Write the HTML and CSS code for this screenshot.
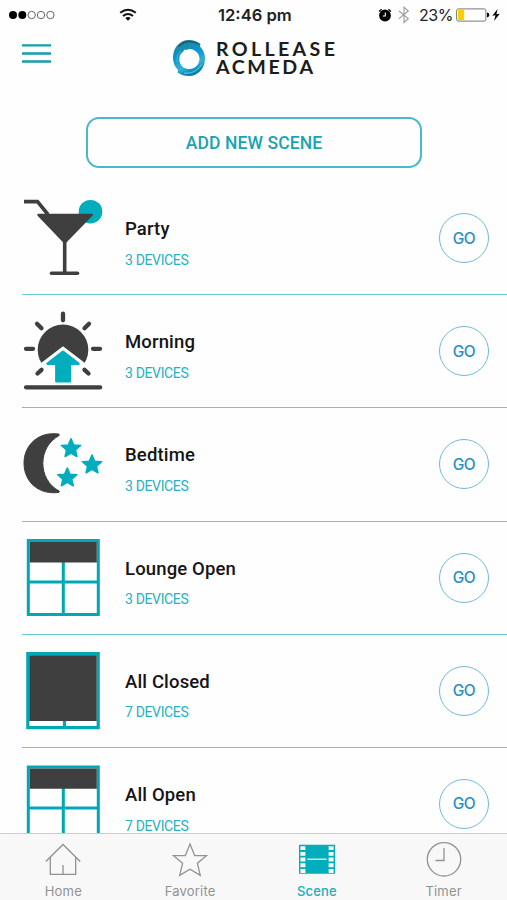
FILE: index.html
```html
<!DOCTYPE html>
<html lang="en">
<head>
<meta charset="utf-8">
<title>Scenes</title>
<link rel="stylesheet" href="styles.css">
</head>
<body>
<div class="app">
  <div class="status">
    <svg class="signal" width="50" height="12" viewBox="0 0 50 12"><circle cx="5" cy="6" r="4"/><circle cx="14.3" cy="6" r="4"/><g fill="none" stroke="#555" stroke-width=".9"><circle cx="23.7" cy="6" r="3.7"/><circle cx="33" cy="6" r="3.7"/><circle cx="42.4" cy="6" r="3.7"/></g></svg>
    <svg class="wifi" width="18" height="14" viewBox="0 0 18 14"><g fill="none" stroke="#111" stroke-width="2"><path d="M1.2 4.8Q9-1.3 16.8 4.8"/><path d="M4 8Q9 3.9 14 8"/></g><path d="M6.3 10Q9 8 11.7 10L9 12.8Z"/></svg>
    <span class="time">12:46 pm</span>
    <div class="right">
      <svg width="14" height="14" viewBox="0 0 14 14"><circle cx="7" cy="7.5" r="5.9"/><path d="M1 3.5L3.6 1.2M13 3.5L10.4 1.2" stroke="#111" stroke-width="1.3"/><path d="M7.3 4.4V8H4.8" fill="none" stroke="#fff" stroke-width="1.1"/></svg>
      <svg class="bt" width="12" height="18" viewBox="0 0 12 18"><path d="M1 5L10.3 12.7L6 16.5V1.2L10.3 5L1 12.7" fill="none" stroke="#999" stroke-width="1.1"/></svg>
      <span class="pct">23%</span>
      <svg class="battery" width="34" height="14" viewBox="0 0 34 14"><rect x=".6" y=".9" width="29.3" height="12.2" rx="1.8" fill="#fff" stroke="#777"/><path d="M2 2H8.2V12H2Z" fill="#fc0"/><path d="M31 4.6Q33.4 5 33.4 7T31 9.4Z"/></svg>
      <svg class="bolt" width="8" height="12" viewBox="0 0 8 12"><path d="M5.6 0L.3 6.8L3.5 6.2L2 12L7.8 4.8L4.4 5.2Z"/></svg>
    </div>
  </div>

  <header class="header">
    <svg class="menu" width="29" height="22" viewBox="0 0 29 22"><path d="M0 2.300H29M0 10.500H29M0 18.500H29" stroke="#159fae" stroke-width="2.300"/></svg>
    <div class="brand">
      <svg width="34" height="38" viewBox="0 0 34 38">
        <defs><linearGradient id="ring" x1="0" y1="0" x2=".35" y2="1"><stop offset="0" stop-color="#17697e"/><stop offset=".22" stop-color="#1b8aa5"/><stop offset=".5" stop-color="#0a96cf"/><stop offset=".8" stop-color="#35b3d5"/><stop offset="1" stop-color="#087fa8"/></linearGradient></defs>
        <path fill="url(#ring)" fill-rule="evenodd" d="M17 1C21.500 1 25 2.300 28.500 5L28 7.500C31.500 11 33 15 33 19.500C33 29.500 26 37 17 37C12.500 37 9 36 5.500 33.500L6 31C2.500 27.500 1 23.500 1 18.500C1 8.500 8 1 17 1ZM17.500 10L13.500 11L12 10.500L11.500 12.500C8.500 14.500 7.300 16.500 7.300 20C7.300 26 11.500 30 17 30C23 30 27.500 25.500 27.500 19.500C27.500 14.500 23 10 17.500 10Z"/>
        <path d="M6.500 7.500Q16 -1.500 27.500 5.500" fill="none" stroke="#1c5d72" stroke-width="1.400"/>
        <path d="M9 12Q3.500 17 5.500 23" fill="none" stroke="#4bb8da" stroke-width="1"/>
        <path d="M12 34Q24 35.500 30 25" fill="none" stroke="#4bbadb" stroke-width="1.500"/>
      </svg>
      <div class="brandname"><span class="l1">ROLLEASE</span><span class="l2">ACMEDA</span></div>
    </div>
  </header>

  <div class="add">ADD NEW SCENE</div>

  <ul class="scenes">
    <li>
      <svg class="pic" viewBox="22 181 84 113"><circle cx="90.500" cy="211.700" r="11.800" fill="#00adbd"/><g fill="none" stroke="#3f3f3f"><path d="M24 201.600H37.500L48 214.500" stroke-width="3.600"/><path d="M64.700 240V272" stroke-width="3.600"/><path d="M51.500 273.300H77.500" stroke-width="3.600" stroke-linecap="round"/></g><path d="M38.500 215H91.500L64.800 242.500Z" fill="#3f3f3f" stroke="#3f3f3f" stroke-width="2.500" stroke-linejoin="round"/></svg>
      <div class="text"><b>Party</b><span>3 DEVICES</span></div><div class="go">GO</div>
    </li>
    <li>
      <svg class="pic" viewBox="22 294.200 84 113"><circle cx="63" cy="350" r="25.300" fill="#3f3f3f"/><path d="M63 346.500L37.500 366V380H88.500V366Z" fill="#fff"/><g stroke="#3f3f3f" stroke-width="4.300" stroke-linecap="round"><path d="M63 313.800V320.500M37 324L41.500 328.500M89 324L84.500 328.500M26 349H33M93 349H100M37.500 373.700L41.500 370M88.500 373.700L84.500 370M26 387.500H100.200"/></g><path d="M63 352L47.500 363.900H56.300V381.500H70V363.900H78.500Z" fill="#00adbd" stroke="#00adbd" stroke-width="2.400" stroke-linejoin="round"/></svg>
      <div class="text"><b>Morning</b><span>3 DEVICES</span></div><div class="go">GO</div>
    </li>
    <li>
      <svg class="pic" viewBox="22 407.400 84 113"><path d="M58.800 434.500C39 431.500 24 445 24 463.500C24 483 39.500 495.500 58.800 492.800Q60 492.300 59 491.300C37.500 480 37.500 447.500 59 436Q60 435 58.800 434.500Z" fill="#3f3f3f" stroke="#3f3f3f" stroke-width="1"/><defs><path id="star" d="M0-9.500L2.700-3.300L9.600-2.800L4.400 1.700L5.900 8.200L0 4.700L-5.900 8.200L-4.400 1.700L-9.600-2.800L-2.700-3.300Z" fill="#00adbd" stroke="#00adbd" stroke-width="1.600" stroke-linejoin="round"/></defs><use href="#star" x="71" y="448.700"/><use href="#star" x="92" y="464.900"/><use href="#star" x="67.300" y="477.900"/></svg>
      <div class="text"><b>Bedtime</b><span>3 DEVICES</span></div><div class="go">GO</div>
    </li>
    <li>
      <svg class="pic" viewBox="22 520.900 84 113"><g fill="none" stroke="#00a8b5" stroke-width="3"><path d="M28.300 540.300H98.300V614.500H28.300ZM63.300 561V614M28.300 582H98.300"/></g><path d="M29.800 541.800H96.800V562.500H29.800Z" fill="#3f3f3f"/></svg>
      <div class="text"><b>Lounge Open</b><span>3 DEVICES</span></div><div class="go">GO</div>
    </li>
    <li>
      <svg class="pic" viewBox="22 633.800 84 113"><g fill="none" stroke="#00a8b5" stroke-width="3.200"><path d="M27.800 653.500H98.200V727.500H27.800ZM64.500 720V727"/></g><path d="M29.300 655H96.700V720.700H29.300Z" fill="#3f3f3f"/></svg>
      <div class="text"><b>All Closed</b><span>7 DEVICES</span></div><div class="go">GO</div>
    </li>
    <li>
      <svg class="pic" viewBox="22 747 84 113"><g fill="none" stroke="#00a8b5" stroke-width="3"><path d="M28.300 767H98.300V841H28.300ZM63.300 788V841M28.300 808H98.300"/></g><path d="M29.800 768.500H96.800V788.700H29.800Z" fill="#3f3f3f"/></svg>
      <div class="text"><b>All Open</b><span>7 DEVICES</span></div><div class="go">GO</div>
    </li>
  </ul>

  <nav class="tabs">
    <div class="tab"><svg width="38" height="38" viewBox="0 0 38 38"><path d="M1.800 20.500L19 3.500L36.200 20.500M6.300 16.500V33.300H31.700V16.500M19 24V33" fill="none" stroke="#929292" stroke-width="1.300"/></svg><span>Home</span></div>
    <div class="tab"><svg width="38" height="38" viewBox="0 0 38 38"><path d="M19 3L23.700 14.700L35.500 14.700L26.400 22.300L29.300 34.300L19 28.300L8.700 34.300L11.600 22.300L2.500 14.700L14.300 14.700Z" fill="none" stroke="#929292" stroke-width="1.300"/></svg><span>Favorite</span></div>
    <div class="tab active"><svg width="38" height="38" viewBox="0 0 38 38"><path d="M1 3.700H37V32.700H1Z" fill="#00adbd"/><g stroke="#f8f8f8" fill="none"><path d="M4.900 5.200V32" stroke-width="5" stroke-dasharray="3.900 1.800"/><path d="M33.100 5.200V32" stroke-width="5" stroke-dasharray="3.900 1.800"/><path d="M9.300 18.200H28.700" stroke-width="1.200"/></g></svg><span>Scene</span></div>
    <div class="tab"><svg width="38" height="38" viewBox="0 0 38 38"><g fill="none" stroke="#929292" stroke-width="1.300"><circle cx="19" cy="18.300" r="16.700"/><path d="M19 7V19.500H10.500"/></g></svg><span>Timer</span></div>
  </nav>
</div>
</body>
</html>
```

FILE: styles.css
```css
* { box-sizing: border-box; }
body { margin: 0; background: #fff; font-family: Roboto, "Liberation Sans", sans-serif; }
svg { display: block; flex: none; }
.app { width: 507px; height: 900px; overflow: hidden; display: flex; flex-direction: column; background: #fefefe; }

.status { height: 30px; flex: none; display: grid; grid-template-columns: 119px 99px 158px 1fr; align-items: center; color: #222; font-family: Inter, sans-serif; }
.signal { margin-left: 8px; }
.time { font-size: 16.6px; font-weight: 600; white-space: nowrap; }
.right { display: flex; align-items: center; padding-left: 2px; }
.bt { margin-left: 6px; }
.pct { margin-left: 9px; width: 35px; font-size: 16px; letter-spacing: -0.4px; white-space: nowrap; }
.battery { margin-left: 2px; }
.bolt { margin-left: 2px; }

.header { height: 87px; flex: none; display: flex; align-items: flex-start; }
.menu { margin: 13px 0 0 22px; }
.brand { display: flex; margin: 9px 0 0 121px; }
.brandname { margin: 1px 0 0 10px; font-family: Lato, sans-serif; font-weight: 700; font-size: 19.6px; line-height: 18.4px; color: #1c1c1c; display: flex; flex-direction: column; white-space: nowrap; }
.l1 { letter-spacing: 3.35px; }
.l2 { letter-spacing: 2.6px; }

.add { flex: none; width: 336px; height: 51px; margin: 0 0 0 86px; border: 2px solid #48b9c6; border-radius: 13px; display: flex; align-items: center; justify-content: center; color: #1ba3b2; font-size: 17.5px; font-weight: 500; letter-spacing: 0.1px; }

.scenes { list-style: none; margin: 14px 0 0; padding: 0 0 0 22px; flex: 1; min-height: 0; overflow: hidden; }
.scenes li { height: 113.2px; border-bottom: 1px solid #6cc8d0; display: flex; align-items: flex-start; }
.pic { width: 84px; height: 113px; margin-top: -1px; }
.text { flex: 1; margin: 35px 0 0 19px; display: flex; flex-direction: column; white-space: nowrap; }
.text b { font-size: 18.5px; line-height: 24px; font-weight: 500; letter-spacing: 0.15px; color: #151515; }
.text span { margin-top: 8.6px; font-size: 14px; line-height: 20px; letter-spacing: -0.35px; color: #27b1c1; }
.go { width: 50px; height: 50px; margin: 31px 18px 0 0; border: 1.3px solid #72b9dc; border-radius: 50%; display: flex; align-items: center; justify-content: center; color: #268fc4; font-family: Inter, sans-serif; font-size: 15.5px; font-weight: 500; letter-spacing: -0.6px; }

.tabs { height: 67px; flex: none; border-top: 1.5px solid #cdcdcd; background: #f8f8f8; display: flex; }
.tab { flex: 1; display: flex; flex-direction: column; align-items: center; padding-top: 7px; color: #929292; font-family: Inter, sans-serif; font-size: 13px; }
.tab span { line-height: 16px; margin-top: 4px; letter-spacing: 0.2px; }
.active { color: #1aadbd; }
.active span { font-weight: 500; }
```
